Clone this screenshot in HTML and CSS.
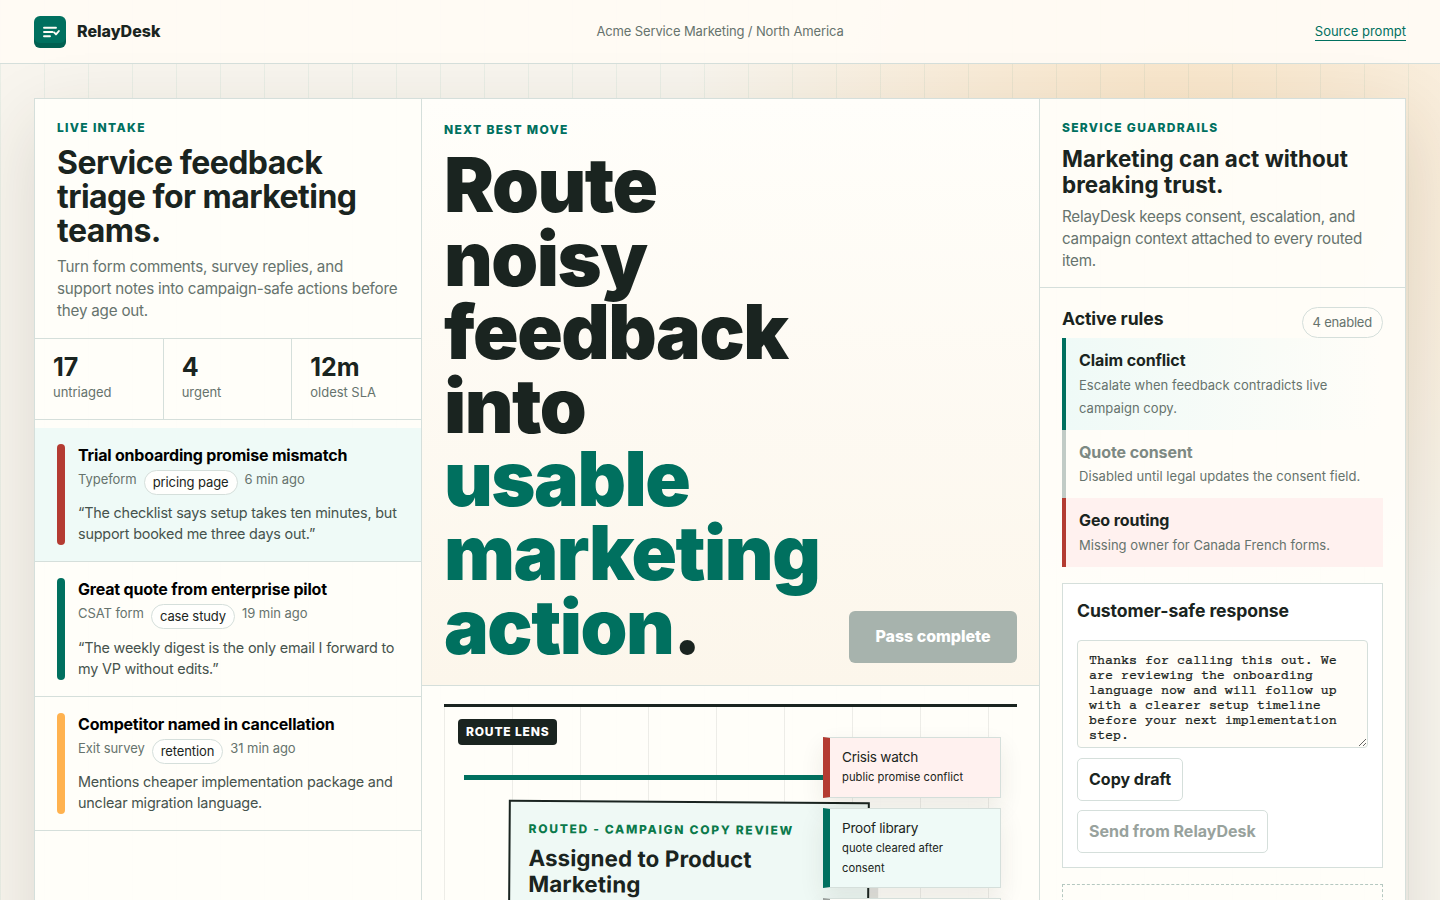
FILE: index.html
```html
<!DOCTYPE html>
<html lang="en">
<head>
<meta charset="utf-8">
<title>RelayDesk</title>
<link rel="stylesheet" href="styles.css">
</head>
<body>
<header class="topbar">
  <div class="brand">
    <span class="mark"><svg viewBox="0 0 32 32" width="32" height="32" fill="none" stroke="#fffdf6" stroke-width="1.9" stroke-linecap="round" stroke-linejoin="round"><path d="M10 11.7h12M10 16h8.5M10 20.3h6M20.1 16.4l1.9 2 2.9-3.4"/></svg></span>
    <span class="brand-name">RelayDesk</span>
  </div>
  <span class="account">Acme Service Marketing / North America</span>
  <a class="source" href="#">Source prompt</a>
</header>
<main class="shell">
  <section class="intake">
    <div class="intake-head">
      <p class="eyebrow">LIVE INTAKE</p>
      <h2 class="intake-title">Service feedback triage for marketing teams.</h2>
      <p class="lede">Turn form comments, survey replies, and support notes into campaign-safe actions before they age out.</p>
    </div>
    <div class="stats">
      <div class="stat"><strong>17</strong><span>untriaged</span></div>
      <div class="stat"><strong>4</strong><span>urgent</span></div>
      <div class="stat"><strong>12m</strong><span>oldest SLA</span></div>
    </div>
    <div class="queue">
      <article class="item selected">
        <span class="bar red"></span>
        <div class="item-body">
          <h3>Trial onboarding promise mismatch</h3>
          <div class="meta"><span>Typeform</span><span class="pill">pricing page</span><span>6 min ago</span></div>
          <p>“The checklist says setup takes ten minutes, but support booked me three days out.”</p>
        </div>
      </article>
      <article class="item">
        <span class="bar green"></span>
        <div class="item-body">
          <h3>Great quote from enterprise pilot</h3>
          <div class="meta"><span>CSAT form</span><span class="pill">case study</span><span>19 min ago</span></div>
          <p>“The weekly digest is the only email I forward to my VP without edits.”</p>
        </div>
      </article>
      <article class="item">
        <span class="bar amber"></span>
        <div class="item-body">
          <h3>Competitor named in cancellation</h3>
          <div class="meta"><span>Exit survey</span><span class="pill">retention</span><span>31 min ago</span></div>
          <p>Mentions cheaper implementation package and unclear migration language.</p>
        </div>
      </article>
    </div>
  </section>
  <section class="work">
    <div class="hero">
      <div class="hero-copy">
        <p class="eyebrow">NEXT BEST MOVE</p>
        <h1>Route noisy feedback into <span class="accent">usable marketing action</span>.</h1>
      </div>
      <button class="pass" disabled>Pass complete</button>
    </div>
    <div class="stage-wrap">
      <div class="stage">
        <span class="lens">ROUTE LENS</span>
        <span class="track"></span>
        <div class="routed">
          <p class="routed-label">ROUTED - CAMPAIGN COPY REVIEW</p>
          <h2>Assigned to Product Marketing</h2>
        </div>
        <div class="lanes">
          <div class="lane crisis"><span>Crisis watch</span><small>public promise conflict</small></div>
          <div class="lane proof"><span>Proof library</span><small>quote cleared after consent</small></div>
          <div class="lane idle"></div>
        </div>
      </div>
    </div>
  </section>
  <aside class="guard">
    <div class="guard-head">
      <p class="eyebrow">SERVICE GUARDRAILS</p>
      <h2 class="guard-title">Marketing can act without breaking trust.</h2>
      <p class="lede">RelayDesk keeps consent, escalation, and campaign context attached to every routed item.</p>
    </div>
    <div class="guard-body">
      <div class="rules-head"><h3>Active rules</h3><span class="count">4 enabled</span></div>
      <div class="rule on"><h4>Claim conflict</h4><p>Escalate when feedback contradicts live campaign copy.</p></div>
      <div class="rule off"><h4>Quote consent</h4><p>Disabled until legal updates the consent field.</p></div>
      <div class="rule error"><h4>Geo routing</h4><p>Missing owner for Canada French forms.</p></div>
      <div class="response">
        <h3>Customer-safe response</h3>
        <textarea class="draft" spellcheck="false">Thanks for calling this out. We are reviewing the onboarding language now and will follow up with a clearer setup timeline before your next implementation step.</textarea>
        <button class="action">Copy draft</button>
        <button class="action" disabled>Send from RelayDesk</button>
      </div>
      <div class="empty"></div>
    </div>
  </aside>
</main>
</body>
</html>
```
FILE: styles.css
```css
:root {
  --ink: #1a2420;
  --muted: #66736d;
  --line: #d5dfdb;
  --green: #00705f;
  --red: #b43b32;
}
* { box-sizing: border-box; }
h1, h2, h3, h4, p { margin: 0; }
body {
  margin: 0;
  height: 900px;
  overflow: hidden;
  font-family: Inter, "Liberation Sans", sans-serif;
  color: var(--ink);
  background:
    linear-gradient(90deg, rgba(0, 112, 95, .06) 1px, transparent 1px) 0 0 / 44px 100%,
    radial-gradient(circle at 82% 18%, rgba(255, 178, 79, .25), transparent 36%),
    #f8f5ee;
}
.topbar {
  height: 64px;
  padding: 0 34px;
  display: grid;
  grid-template-columns: 1fr auto 1fr;
  align-items: center;
  background: rgba(255, 251, 244, .94);
  border-bottom: 1px solid var(--line);
}
.brand { display: flex; align-items: center; gap: 11px; }
.mark {
  width: 32px;
  height: 32px;
  border-radius: 6px;
  background: var(--green);
  box-shadow: inset 0 -5px 0 rgba(0, 0, 0, .14);
}
.mark svg { display: block; }
.brand-name { padding-bottom: 2px; font-size: 16px; font-weight: 800; }
.account { padding-bottom: 2px; font-size: 13px; letter-spacing: -.13px; color: var(--muted); }
.source {
  justify-self: end;
  font-size: 13px;
  line-height: 17px;
  color: var(--green);
  text-decoration: none;
  border-bottom: 1px solid var(--green);
}
.shell {
  margin: 34px 34px 0;
  height: 1100px;
  display: grid;
  grid-template-columns: 387px 618px 1fr;
  border: 1px solid var(--line);
  background: rgba(255, 254, 250, .93);
  box-shadow: 0 24px 70px rgba(50, 43, 28, .14);
}
.intake, .work { border-right: 1px solid var(--line); }
.eyebrow {
  font-size: 12px;
  line-height: 18px;
  font-weight: 800;
  letter-spacing: 1.3px;
  color: var(--green);
}
.lede { font-size: 15.2px; line-height: 22px; letter-spacing: -.21px; color: var(--muted); }
.intake-head { height: 240px; padding: 20px 22px 0; border-bottom: 1px solid var(--line); }
.intake-title { margin-top: 9px; font-size: 32px; line-height: 34px; font-weight: 700; letter-spacing: -.53px; }
.intake-head .lede { margin-top: 8px; }
.stats { height: 81px; display: grid; grid-template-columns: repeat(3, 1fr); border-bottom: 1px solid var(--line); }
.stat { padding: 14px 18px 0; border-right: 1px solid var(--line); }
.stat:last-child { border-right: 0; }
.stat strong { display: block; font-size: 25px; line-height: 29px; font-weight: 700; }
.stat span { display: block; margin-top: 1px; font-size: 13px; line-height: 19px; letter-spacing: -.03px; color: var(--muted); }
.queue { padding-top: 8px; }
.item {
  height: 134.4px;
  padding: 16px 22px;
  display: grid;
  grid-template-columns: 8px 1fr;
  column-gap: 13px;
  border-bottom: 1px solid var(--line);
}
.item.selected { background: #effaf7; }
.bar { border-radius: 4px; }
.bar.red { background: var(--red); }
.bar.green { background: var(--green); }
.bar.amber { background: #ffb24f; }
.item h3 { font-size: 16px; line-height: 23px; font-weight: 650; letter-spacing: -.2px; color: #000; }
.meta { height: 32.2px; margin-top: 3px; display: flex; align-items: flex-start; gap: 7px; font-size: 13px; line-height: 19px; letter-spacing: -.06px; color: var(--muted); }
.pill { height: 25px; padding: 2px 8px; border: 1px solid var(--line); border-radius: 13px; background: #fffffd; color: var(--ink); letter-spacing: -.1px; }
.item p { font-size: 14.4px; line-height: 21px; letter-spacing: -.2px; color: #46534d; }
.hero {
  height: 587px;
  padding: 22px;
  display: flex;
  justify-content: space-between;
  align-items: flex-end;
  border-bottom: 1px solid var(--line);
  background: linear-gradient(180deg, #fffefa, #fcf6eb);
}
.hero-copy { width: 390px; align-self: flex-start; }
h1 { margin-top: 9px; font-size: 75.2px; line-height: 73.6px; font-weight: 900; letter-spacing: -.02em; }
.accent { color: var(--green); }
button { font-family: inherit; }
.pass { width: 168px; height: 52px; flex: none; padding: 0 0 2px; border: 0; border-radius: 6px; background: #a7b3ad; color: #fff; font-size: 16px; font-weight: 850; letter-spacing: -.05px; }
.stage-wrap { padding: 18px 22px; }
.stage {
  position: relative;
  height: 480px;
  border-top: 3px solid var(--ink);
  background: linear-gradient(90deg, rgba(26, 36, 32, .08) 1px, transparent 1px) 0 0 / 68px 100%;
}
.lens {
  position: absolute;
  left: 14px;
  top: 12px;
  padding: 0 8px;
  border-radius: 4px;
  background: var(--ink);
  color: #fff;
  font-size: 12px;
  line-height: 26px;
  font-weight: 850;
  letter-spacing: .068em;
}
.track { position: absolute; left: 20px; top: 68px; width: 380px; height: 5px; background: var(--green); }
.routed {
  position: absolute;
  left: 64px;
  top: 94px;
  width: 361px;
  height: 240px;
  padding: 17.5px 18px;
  border: 2px solid var(--ink);
  background: #eff9f5;
  box-shadow: 9px 9px 0 rgba(26, 36, 32, .12);
  transform: rotate(.4deg);
}
.routed-label { font-size: 12px; line-height: 18px; font-weight: 800; letter-spacing: 1.7px; color: #0b7a4b; }
.routed h2 { margin-top: 7px; font-size: 22.4px; line-height: 26.6px; font-weight: 700; letter-spacing: .08px; }
.lanes { position: absolute; top: 30px; right: 16px; width: 178px; display: grid; gap: 10px; }
.lane { height: 61px; padding: 9px 12px; border: 1px solid var(--line); border-left: 7px solid #9a9f9c; box-shadow: 0 10px 24px rgba(50, 43, 28, .09); font-size: 13.6px; line-height: 20px; letter-spacing: -.24px; background: #fffefa; }
.lane span, .lane small { display: block; }
.lane small { font-size: 11.2px; letter-spacing: .04px; }
.lane.crisis { border-left-color: var(--red); background: #fff1ef; }
.lane.proof { height: 80px; border-left-color: var(--green); background: #effaf7; }
.guard-head { height: 189px; padding: 20px 22px 0; border-bottom: 1px solid var(--line); }
.guard-title { margin-top: 9px; font-size: 22.4px; line-height: 26px; font-weight: 700; letter-spacing: .03px; }
.guard-head .lede { margin-top: 8px; }
.guard-body { padding: 19px 22px; }
.rules-head { height: 31px; display: flex; justify-content: space-between; }
.rules-head h3, .response h3 { font-size: 17.6px; line-height: 24px; font-weight: 650; letter-spacing: -.08px; }
.count { height: 31px; padding: 0 10px; border: 1px solid var(--line); border-radius: 16px; font-size: 13px; line-height: 29px; letter-spacing: -.2px; color: var(--muted); }
.rule { padding: 11px 13px; border-left: 4px solid var(--green); }
.rule h4 { font-size: 16px; line-height: 23px; font-weight: 700; letter-spacing: -.09px; }
.rule p { margin-top: 2px; font-size: 13px; line-height: 23px; letter-spacing: .03px; color: var(--muted); }
.rule.on { height: 92px; background: linear-gradient(90deg, #effaf7, transparent); }
.rule.off { height: 68px; border-left-color: #c1cbc6; }
.rule.off p { margin-top: 1px; letter-spacing: .05px; }
.rule.off h4 { color: #7d8983; }
.rule.error { height: 69px; border-left-color: var(--red); background: #fff1ef; }
.response { height: 285px; margin-top: 16px; padding: 15px 14px 14px; border: 1px solid var(--line); background: #fff; }
.draft {
  display: block;
  width: 100%;
  height: 108px;
  margin: 17px 0 10px;
  padding: 13px 11px 0;
  border: 1px solid var(--line);
  border-radius: 4px;
  background: #fffdf8;
  color: var(--ink);
  font-family: "Courier Prime", FreeMono, "Nimbus Mono PS", "Liberation Mono", monospace;
  font-size: 13.333px;
  line-height: 15px;
  -webkit-text-stroke: .2px var(--ink);
  overflow: hidden;
  resize: both;
}
.action {
  display: block;
  height: 43px;
  margin-bottom: 9px;
  padding: 0 11px 1px;
  border: 1px solid var(--line);
  border-radius: 5px;
  background: #fff;
  color: var(--ink);
  font-size: 16px;
  font-weight: 750;
}
.action:disabled { color: #98a29d; }
.empty { height: 120px; margin-top: 16px; border: 1px dashed #b5c8c0; }
```
